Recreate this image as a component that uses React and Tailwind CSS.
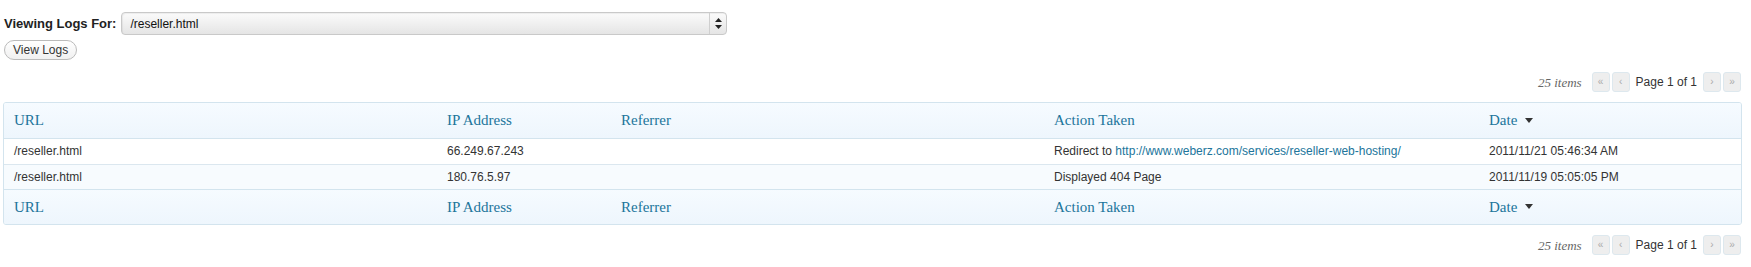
import React from "react";

const serif = { fontFamily: '"Liberation Serif", "Times New Roman", serif' };

function SortArrow() {
  return (
    <svg width="8" height="5" viewBox="0 0 8 5" className="ml-[8px] inline-block align-middle">
      <path d="M0 0 L8 0 L4 5 Z" fill="#333" />
    </svg>
  );
}

function HeaderRow() {
  const cls = "px-[10px] text-left font-normal text-[15px] text-[#21759b] h-[35px] align-middle";
  return (
    <tr className="bg-gradient-to-b from-[#f6fbff] to-[#eef6fd]">
      <th className={cls} style={serif}>URL</th>
      <th className={cls} style={serif}>IP Address</th>
      <th className={cls} style={serif}>Referrer</th>
      <th className={cls} style={serif}>Action Taken</th>
      <th className={cls} style={serif}>
        <span className="inline-flex items-center">Date<SortArrow /></span>
      </th>
    </tr>
  );
}

function Pager() {
  const btn =
    "flex h-[20px] w-[18px] items-center justify-center rounded-[3px] border border-[#dde8ee] bg-[#eeeeee] text-[10px] text-[#aaaaaa] leading-none";
  return (
    <div className="flex h-[20px] items-center justify-end pr-[10px]">
      <span className="mr-[10px] text-[13px] italic text-[#666] leading-none" style={serif}>25 items</span>
      <div className="flex items-center gap-[2px]">
        <span className={btn}>«</span>
        <span className={btn}>‹</span>
      </div>
      <span className="mx-[6px] text-[12px] text-[#333] leading-none">Page 1 of 1</span>
      <div className="flex items-center gap-[2px]">
        <span className={btn}>›</span>
        <span className={btn}>»</span>
      </div>
    </div>
  );
}

export default function App() {
  return (
    <div className="w-[1751px] h-[267px] bg-white text-[#333]" style={{ fontFamily: '"Liberation Sans", Arial, sans-serif' }}>
      <div className="pt-[12px] pl-[4px]">
        <div className="flex h-[23px] items-center">
          <span className="text-[13px] font-bold text-[#222]">Viewing Logs For:</span>
          <div className="ml-[5px] flex h-[23px] w-[606px] items-center rounded-[4px] border border-[#c9c9c9] bg-gradient-to-b from-[#fbfbfb] to-[#e5e5e5] shadow-[inset_1px_1px_1px_rgba(0,0,0,0.06)]">
            <span className="flex-1 pl-[8px] text-[12px] text-[#111]">/reseller.html</span>
            <div className="flex h-full w-[17px] items-center justify-center border-l border-[#cfcfcf]">
              <svg width="7" height="11" viewBox="0 0 7 11">
                <path d="M3.5 0 L7 4 L0 4 Z" fill="#222" />
                <path d="M0 7 L7 7 L3.5 11 Z" fill="#222" />
              </svg>
            </div>
          </div>
        </div>
        <div className="mt-[5px] flex">
          <span className="flex h-[20px] items-center rounded-full border border-[#bbbbbb] bg-gradient-to-b from-white to-[#f0f0f0] px-[8px] text-[12px] text-[#333]">
            View Logs
          </span>
        </div>
      </div>

      <div className="mt-[12px]">
        <Pager />
      </div>

      <div className="mt-[10px] ml-[3px] w-[1739px] overflow-hidden rounded-[3px] border border-[#d3e4ee]">
        <table className="w-full table-fixed border-collapse">
          <colgroup>
            <col className="w-[433px]" />
            <col className="w-[174px]" />
            <col className="w-[433px]" />
            <col className="w-[435px]" />
            <col />
          </colgroup>
          <thead className="border-b border-[#d3e4ee]">
            <HeaderRow />
          </thead>
          <tbody className="text-[12px] text-[#333]">
            <tr className="h-[26px] bg-white border-b border-[#dbe7ef]">
              <td className="px-[10px]">/reseller.html</td>
              <td className="px-[10px]">66.249.67.243</td>
              <td className="px-[10px]"></td>
              <td className="px-[10px] whitespace-nowrap">
                Redirect to <span className="text-[#21759b]">http://www.weberz.com/services/reseller-web-hosting/</span>
              </td>
              <td className="px-[10px]">2011/11/21 05:46:34 AM</td>
            </tr>
            <tr className="h-[25px] bg-[#f7fbfe] border-b border-[#d3e4ee]">
              <td className="px-[10px]">/reseller.html</td>
              <td className="px-[10px]">180.76.5.97</td>
              <td className="px-[10px]"></td>
              <td className="px-[10px]">Displayed 404 Page</td>
              <td className="px-[10px]">2011/11/19 05:05:05 PM</td>
            </tr>
          </tbody>
          <tfoot>
            <HeaderRow />
          </tfoot>
        </table>
      </div>

      <div className="mt-[10px]">
        <Pager />
      </div>
    </div>
  );
}
